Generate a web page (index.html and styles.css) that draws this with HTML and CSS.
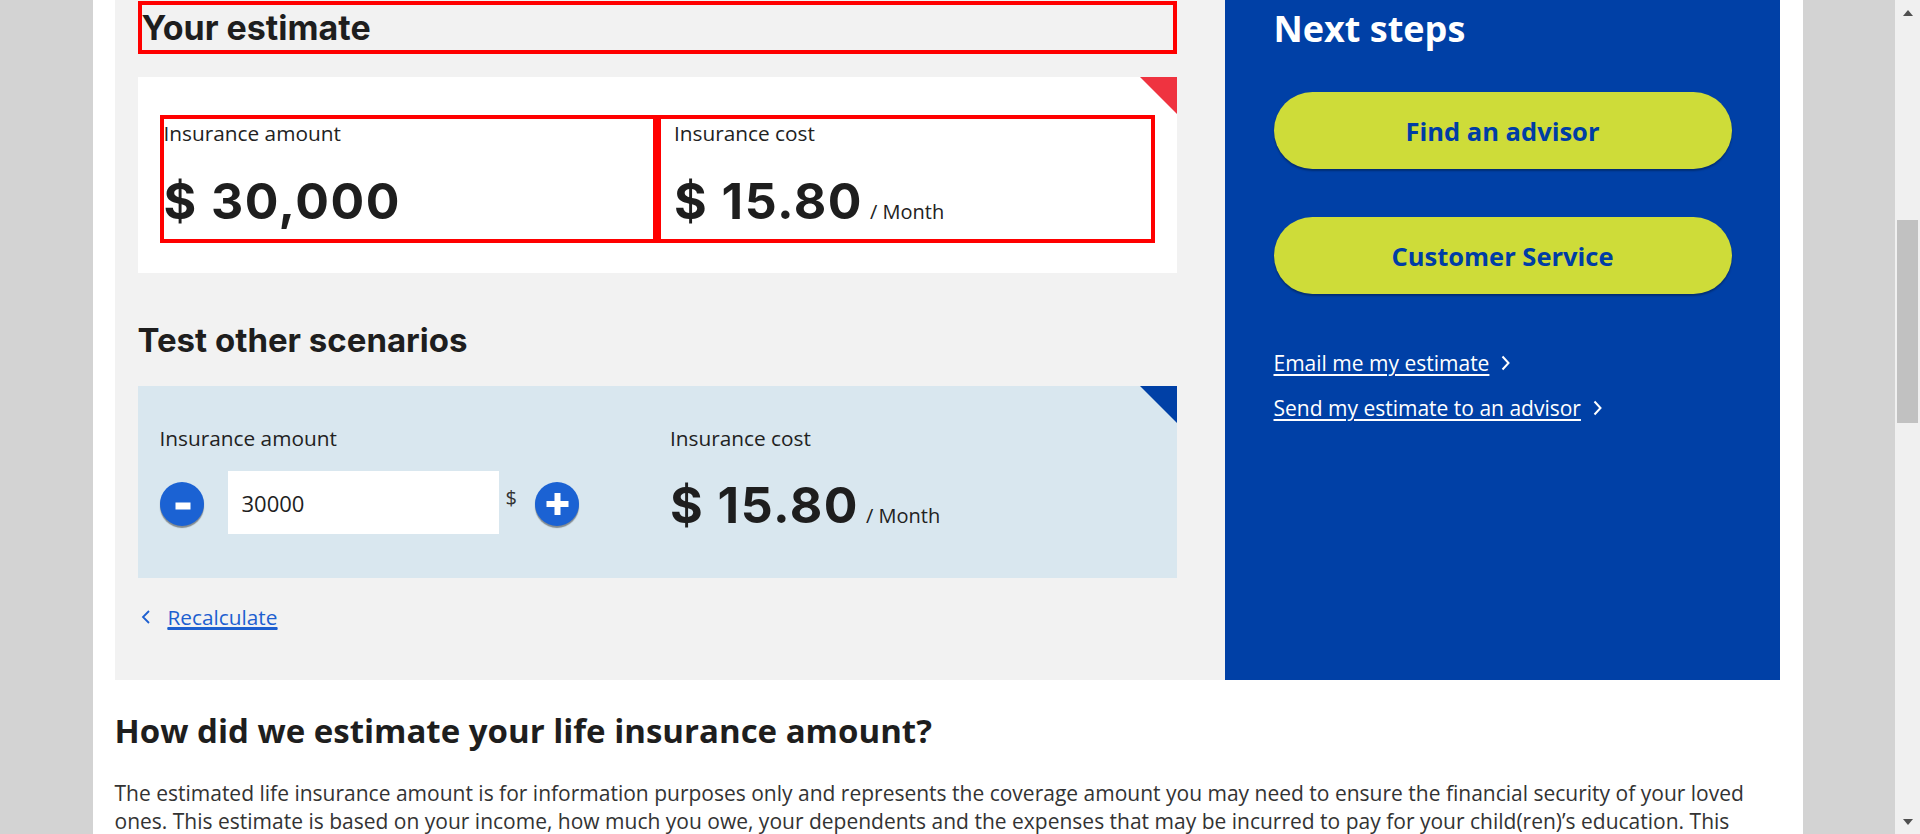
FILE: index.html
```html
<!DOCTYPE html>
<html lang="en">
<head>
<meta charset="utf-8">
<title>Your estimate</title>
<link rel="stylesheet" href="styles.css">
</head>
<body>
<div class="viewport">
  <div class="page">
    <div class="container">
      <div class="results">
        <section class="estimate">
          <h2 class="estimate-title">Your estimate</h2>
          <div class="card">
            <div class="figure">
              <div class="figure-label">Insurance amount</div>
              <div class="figure-value"><span class="num">$ 30,000</span></div>
            </div>
            <div class="figure figure-right">
              <div class="figure-label">Insurance cost</div>
              <div class="figure-value"><span class="num">$ 15.80</span><span class="unit">/ Month</span></div>
            </div>
          </div>

          <h3 class="scenarios-title">Test other scenarios</h3>
          <div class="scenario">
            <div class="scenario-col">
              <label class="figure-label" for="amount">Insurance amount</label>
              <div class="stepper">
                <button class="step" type="button" aria-label="Decrease">
                  <svg width="44" height="44" viewBox="0 0 44 44"><rect x="15.5" y="20.5" width="15" height="7" fill="#fff"/></svg>
                </button>
                <input id="amount" class="amount-input" type="text" value="30000">
                <span class="currency">$</span>
                <button class="step" type="button" aria-label="Increase">
                  <svg width="44" height="44" viewBox="0 0 44 44"><rect x="19.5" y="11" width="6" height="22" fill="#fff"/><rect x="11.5" y="19" width="22" height="6" fill="#fff"/></svg>
                </button>
              </div>
            </div>
            <div class="scenario-col scenario-right">
              <div class="figure-label">Insurance cost</div>
              <div class="figure-value figure-value-tight"><span class="num">$ 15.80</span><span class="unit">/ Month</span></div>
            </div>
          </div>

          <a class="back-link" href="#">
            <svg class="back-chevron" width="10" height="14" viewBox="0 0 10 14"><path d="M8 1 L2 7 L8 13" fill="none" stroke="#1d5fd0" stroke-width="1.8"/></svg>
            <span class="back-text">Recalculate</span>
          </a>
        </section>

        <aside class="next-steps">
          <h2 class="next-title">Next steps</h2>
          <a class="pill" href="#">Find an advisor</a>
          <a class="pill pill-second" href="#">Customer Service</a>
          <ul class="links">
            <li class="link-item"><a href="#">Email me my estimate</a><svg class="chev" width="9" height="16" viewBox="0 0 9 16"><path d="M1.5 1.5 L7.5 8 L1.5 14.5" fill="none" stroke="#fff" stroke-width="2"/></svg></li>
            <li class="link-item"><a href="#">Send my estimate to an advisor</a><svg class="chev" width="9" height="16" viewBox="0 0 9 16"><path d="M1.5 1.5 L7.5 8 L1.5 14.5" fill="none" stroke="#fff" stroke-width="2"/></svg></li>
          </ul>
        </aside>
      </div>

      <section class="explain">
        <h2 class="explain-title">How did we estimate your life insurance amount?</h2>
        <p class="explain-text">The estimated life insurance amount is for information purposes only and represents the coverage amount you may need to ensure the financial security of your loved ones. This estimate is based on your income, how much you owe, your dependents and the expenses that may be incurred to pay for your child(ren)’s education. This estimate does not replace the advice of a financial security advisor.</p>
      </section>
    </div>
  </div>

  <div class="scrollbar" aria-hidden="true">
    <div class="sb-btn"><span class="sb-up"></span></div>
    <div class="sb-track"><div class="sb-thumb"></div></div>
    <div class="sb-btn"><span class="sb-down"></span></div>
  </div>
</div>
</body>
</html>
```

FILE: styles.css
```css
* { box-sizing: border-box; }

html, body {
  margin: 0;
  height: 100%;
}

body {
  background: #d3d3d3;
  font-family: "Open Sans", "Liberation Sans", sans-serif;
  color: #222;
  overflow: hidden;
}

.viewport {
  display: flex;
  height: 834px;
}

.page {
  flex: 1;
  display: flex;
  justify-content: center;
  overflow: hidden;
}

.container {
  width: 1710px;
  flex: none;
  background: #fff;
  padding: 0 23px 0 22px;
}

.results {
  display: grid;
  grid-template-columns: 1110px 555px;
}

/* ---------- left: estimate ---------- */
.estimate {
  background: #f2f2f2;
  padding: 1px 48px 49px 23px;
}

.estimate-title {
  margin: 0;
  border: 4px solid #ff0000;
  font-family: "Inter", "Liberation Sans", sans-serif;
  font-weight: 700;
  font-size: 34px;
  line-height: 45px;
  color: #1e1e1e;
  padding-left: 0;
}

.card {
  position: relative;
  margin-top: 23px;
  background: #fff;
  padding: 38px 22px 30px;
  display: grid;
  grid-template-columns: 1fr 1fr;
}

.card::after {
  content: "";
  position: absolute;
  top: 0;
  right: 0;
  border-top: 37px solid #ef3340;
  border-left: 37px solid transparent;
}

.figure {
  border: 4px solid #ff0000;
  padding-bottom: 8px;
}

.figure-right {
  padding-left: 13px;
}

.figure-label {
  display: block;
  font-size: 20.8px;
  line-height: 28px;
  color: #222;
}

.figure-value {
  margin-top: 24px;
  height: 60px;
  display: flex;
  align-items: baseline;
  line-height: 60px;
}

.figure-value-tight {
  height: 58px;
  line-height: 58px;
}

.num {
  font-family: "Inter", "Liberation Sans", sans-serif;
  font-weight: 700;
  font-size: 50px;
  color: #1e1e1e;
  letter-spacing: 1.5px;
}

.unit {
  font-size: 20px;
  line-height: 28px;
  margin-left: 7px;
  color: #222;
}

.scenarios-title {
  margin: 47px 0 26px;
  font-family: "Inter", "Liberation Sans", sans-serif;
  font-weight: 700;
  font-size: 33px;
  line-height: 40px;
  color: #1e1e1e;
}

.scenario {
  position: relative;
  background: #d9e7ef;
  padding: 38px 22px 44px;
  display: grid;
  grid-template-columns: 1fr 1fr;
}

.scenario::after {
  content: "";
  position: absolute;
  top: 0;
  right: 0;
  border-top: 37px solid #0040a6;
  border-left: 37px solid transparent;
}

.scenario-right {
  padding-left: 13px;
}

.stepper {
  margin-top: 19px;
  display: flex;
  align-items: center;
  height: 63px;
}

.step {
  width: 44px;
  height: 44px;
  flex: none;
  padding: 0;
  border: 0;
  border-radius: 50%;
  background: #1b62d3;
  box-shadow: 0 2px 1px rgba(0, 0, 0, 0.4);
  display: flex;
  margin-top: 3px;
}

.amount-input {
  width: 271px;
  height: 63px;
  margin-left: 24px;
  border: 0;
  padding: 0 14px;
  font-family: "Open Sans", sans-serif;
  font-size: 22px;
  color: #1e1e1e;
  background: #fff;
  outline: none;
}

.currency {
  align-self: flex-start;
  margin: 17px 18px 0 7px;
  font-size: 20px;
  line-height: 20px;
  color: #333;
}

.back-link {
  margin-top: 25px;
  display: inline-flex;
  align-items: center;
  color: #1d5fd0;
  font-size: 20.8px;
  line-height: 28px;
}

.back-chevron {
  margin-left: 3px;
  margin-right: 17px;
}

.back-text {
  text-decoration: underline;
  text-underline-offset: 3px;
}

/* ---------- right: next steps ---------- */
.next-steps {
  background: #0040a6;
  color: #fff;
  padding: 8px 48px 0 49px;
}

.next-title {
  margin: 0;
  font-family: "Open Sans", sans-serif;
  font-weight: 700;
  font-size: 36px;
  line-height: 42px;
}

.pill {
  margin-top: 42px;
  height: 77px;
  border-radius: 39px;
  background: #cedc39;
  color: #003da5;
  font-weight: 700;
  font-size: 25.5px;
  text-decoration: none;
  display: flex;
  align-items: center;
  justify-content: center;
  box-shadow: 0 2px 2px rgba(0, 0, 0, 0.3);
}

.pill-second {
  margin-top: 48px;
}

.links {
  list-style: none;
  margin: 55px 0 0;
  padding: 0;
  display: flex;
  flex-direction: column;
  gap: 17px;
}

.link-item {
  display: flex;
  align-items: center;
  font-size: 21px;
  line-height: 28px;
}

.link-item a {
  color: #fff;
  text-decoration: underline;
  text-underline-offset: 3px;
}

.chev {
  margin-left: 12px;
}

/* ---------- explanation ---------- */
.explain {
  padding-top: 33px;
}

.explain-title {
  margin: 0;
  font-family: "Open Sans", sans-serif;
  font-weight: 700;
  font-size: 33px;
  line-height: 36px;
  color: #1e1e1e;
}

.explain-text {
  margin: 30px 0 0;
  font-size: 21px;
  line-height: 28px;
  color: #333;
}

/* ---------- scrollbar ---------- */
.scrollbar {
  width: 25px;
  flex: none;
  background: #f0f0f0;
  display: flex;
  flex-direction: column;
}

.sb-btn {
  height: 25px;
  display: flex;
  align-items: center;
  justify-content: center;
}

.sb-up {
  border-left: 5.5px solid transparent;
  border-right: 5.5px solid transparent;
  border-bottom: 6px solid #505050;
}

.sb-down {
  border-left: 5.5px solid transparent;
  border-right: 5.5px solid transparent;
  border-top: 6px solid #505050;
}

.sb-track {
  flex: 1;
  padding: 195px 2px 0;
}

.sb-thumb {
  height: 203px;
  background: #c1c1c1;
}
```
